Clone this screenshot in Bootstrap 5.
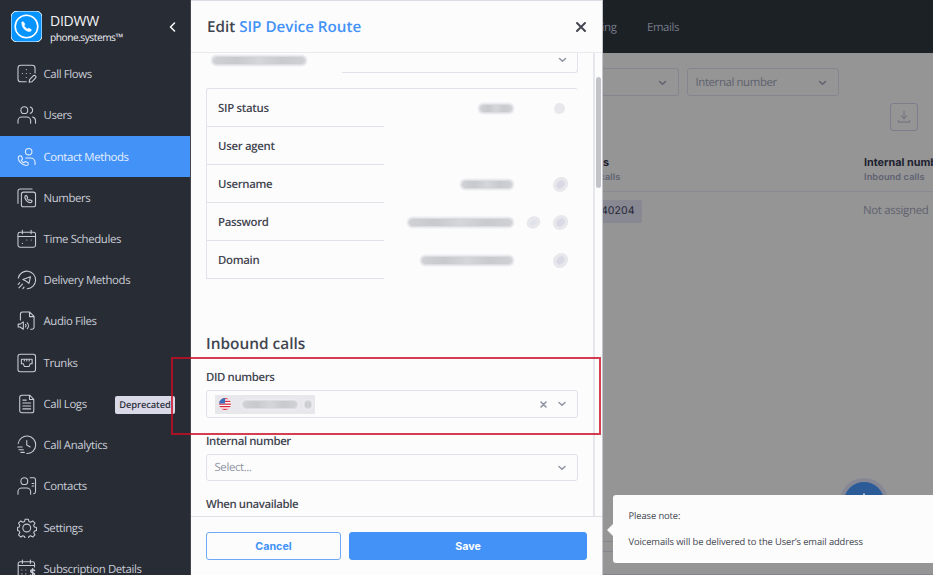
<!DOCTYPE html>
<html lang="en">
<head>
<meta charset="utf-8">
<meta name="viewport" content="width=device-width, initial-scale=1">
<title>Edit SIP Device Route</title>
<link rel="stylesheet" href="https://cdn.jsdelivr.net/npm/bootstrap@5.3.0/dist/css/bootstrap.min.css">
<style>
  body{font-family:"Open Sans",sans-serif;font-size:11.4px;line-height:16px;color:#42454f;background:#959595;text-rendering:geometricPrecision}
  .app{width:933px;height:575px}
  svg{display:block;fill:none;stroke:currentColor;stroke-linecap:round;stroke-linejoin:round}
  .side-link,.fact-name,.field-name,.picker,.back-nav,.filter{letter-spacing:-.38px}
  /* sidebar */
  .side{width:191px;background:#282c35;color:#c5c8d3;border-right:1px solid #44474f}
  .brand-row{height:53.5px;padding:0 13px 0 11px;color:#fff}
  .brand-name{font-size:14px;line-height:16px;color:#f4f4f6;letter-spacing:-.25px;padding-top:1px}
  .brand-sub{font-size:10.2px;line-height:15px;color:#f0f0f4;letter-spacing:-.48px}
  .side-link{height:41.22px;padding:2px 16px 0 17px;gap:7px;color:#c9ccd6;margin-right:-1px}
  .side-link svg{width:19.5px;height:20px;stroke-width:1.1;margin-top:-2px}
  .side-link.current{background:#4292f7;color:#e6efff}
  .tag{width:60px;height:18px;line-height:18px;background:#d9d9e8;color:#30333f;border-radius:2px;font-size:9.4px;font-weight:600;letter-spacing:-.12px}
  /* route editor */
  .panel{width:412px;background:#fcfcfd;border-top:1px solid #dcdce8;border-right:1px solid #c5c5d0}
  .panel-head{height:52px;padding:0 15px 0 16px;border-bottom:1px solid #e9e9ee}
  .panel-title{font-size:15.2px;line-height:20px;font-weight:600;color:#42454f;padding-top:1px}
  .accent{color:#4292f7}
  .panel-body{padding:0 15px 0 15px;border-right:2px solid #e6e6ee}
  .rail{width:7px;padding:24px 1px 0 1px}
  .thumb{width:5px;height:111px;border-radius:3px;background:#c2c3c9}
  .muted-ico{color:#8f93a1}
  .cut-field{height:19.5px;margin-bottom:15px;padding:0 11px 0 7px;position:relative}
  .cut-field::before{content:"";position:absolute;left:136px;right:0;top:0;bottom:0;border:1px solid #e2e2ea;border-width:0 1px 1px 0;border-radius:0 0 3px 0}
  .facts{width:372px;border:1px solid #e2e2eb;border-right:0;border-bottom:0;border-radius:3px 3px 0 0}
  .fact{height:38.15px;padding:1px 13px 0 0}
  .fact-name{width:177px;height:100%;padding:2px 0 0 11px;border-bottom:1px solid #e2e2eb;font-weight:600;letter-spacing:-.3px}
  .tail{width:53px;gap:19px}
  .smudge{height:7px;border-radius:5px;background:linear-gradient(90deg,#d0d1d5,#c8c9cd 25%,#d5d6da 50%,#c9cace 75%,#d0d1d5);box-shadow:0 0 0 1px #dcdde1,0 0 0 2.5px #ececf0}
  .blot{width:9px;height:7px;border-radius:50%;background:#d9d9e6;box-shadow:0 0 0 3.5px #e7e7ec;transform:rotate(-42deg)}
  .blot.even{width:11px;height:11px;box-shadow:none;background:#e7e7ec}
  .blot.faint{width:7px;height:5px;background:#dfe2ea;transform:rotate(-25deg)}
  .section-name{font-size:15.4px;line-height:20px;font-weight:600;margin:55px 0 15px}
  .field-name{font-weight:600;line-height:16px;padding-top:1px}
  .picker{height:27.5px;width:372px;padding:1px 10px 0 7.5px;margin:4px 0 15px;border:1px solid #e1e1ea;border-radius:3px;color:#8f93a1}
  .chip{width:100px;height:18.5px;background:#e7e7ec;padding:0 4px 0 4px}
  .flag{margin-right:12px}
  .panel-foot{height:59px;padding:15px 15px 0;border-top:1px solid #dfdfe6;gap:8px}
  .act{--bs-btn-padding-y:0;--bs-btn-padding-x:0;--bs-btn-font-size:10.7px;--bs-btn-font-weight:700;--bs-btn-border-radius:3px;font-family:Inter,sans-serif;height:28px;line-height:27px}
  .act-cancel{width:135px;color:#4292f7;border-color:#6caaf8;background:#fcfcfd}
  .act-save{width:238px;color:#fff;border-color:#4292f7;background:#4292f7}
  /* dimmed page behind the editor */
  .back{background:#959595;color:#5f616f;border-bottom:1px solid #85858e}
  .back-nav{height:53px;background:#1c2126;color:#767a89;gap:30.5px;padding-top:2px}
  .cut-text{display:flex;justify-content:flex-end}
  .filters{margin-top:15px}
  .filter{height:28px;border:1px solid #85858f;border-radius:3px;padding:2px 11px 0 8px}
  .filter svg{margin-top:-1px}
  .f-one{width:76px;border-left:0;border-radius:0 3px 3px 0}
  .f-two{width:152.5px;margin-left:7.5px}
  .dl{width:28px;height:28px;border:1px solid #7d7d8c;border-radius:3px;color:#777786;margin:7px 0 0 287px}
  .th-row{height:61px;padding-top:24px;border-bottom:1px solid #8a8a93;font-family:Inter,sans-serif}
  .th-main{font-size:10.8px;line-height:15px;font-weight:700;color:#1e2230}
  .th-sub{font-size:9.2px;line-height:15px;font-weight:600;color:#5f6272;letter-spacing:.1px}
  .num{width:39px;height:22.5px;background:#888893;color:#242733;font-family:Inter,sans-serif;font-size:10.6px;border-radius:0 2px 2px 0;padding-right:7.5px}
  .unset{width:70px;letter-spacing:-.3px}
  .strip{height:11px;border:solid #85858e;border-width:1px 0;margin-bottom:22px}
  /* overlays */
  .fab{left:840px;top:478px;width:48px;height:48px;border-radius:50%;background:#2c5c98;border:4px solid #858794;color:#d5dae3;padding-top:11px}
  .note{left:613px;top:494.5px;width:330px;height:68.5px;background:#fcfcfd;border-radius:3px 0 0 3px;padding:13px 15.5px;font-size:9.35px;line-height:16px;letter-spacing:-.09px}
  .note-text{margin-top:10px}
  .note::before{content:"";position:absolute;left:-6px;top:29px;border:6px solid transparent;border-left:0;border-right-color:#fcfcfd}
  .callout-box{left:170.5px;top:357px;width:430px;height:78px;border:2px solid rgba(202,12,36,.8)}
</style>
<script src="https://cdn.jsdelivr.net/npm/bootstrap@5.3.0/dist/js/bootstrap.bundle.min.js"></script>
</head>
<body>
<div class="app d-flex position-relative overflow-hidden">

<aside class="side d-flex flex-column flex-shrink-0 overflow-hidden">
  <div class="brand-row d-flex align-items-center flex-shrink-0">
    <svg width="31" height="31" viewBox="0 0 31 31" stroke="none"><rect width="31" height="31" rx="6" fill="#0894ff"/><circle cx="15.5" cy="15.5" r="11.3" fill="none" stroke="#fff" stroke-width="1.6"/><path d="M11 11.300l1.200-.6 1.700 2.400-.8 1.600c.7 1.500 1.800 2.600 3.300 3.300l1.500-.8 2.500 1.500-.7 1.500c-4.100 1.500-9.900-4-8.700-8.900z" fill="#fff" stroke="#fff" stroke-width=".6"/></svg>
    <div class="ms-2 flex-grow-1 pt-1"><div class="brand-name">DIDWW</div><div class="brand-sub">phone.systems™</div></div>
    <svg width="9" height="10" viewBox="0 0 9 10" stroke-width="1.5"><path d="M6.500 1L2.500 5l4 4"/></svg>
  </div>
  <nav class="d-flex flex-column flex-shrink-0">
    <a class="side-link d-flex align-items-center text-decoration-none flex-shrink-0"><svg viewBox="0 0 20 20"><path d="M9.500 18H4a3 3 0 0 1-3-3V4a3 3 0 0 1 3-3h11.500a3 3 0 0 1 3 3v5M12.500 18.500l.4-2.800 3.700-3.700a1.600 1.600 0 0 1 2.300 2.300l-3.700 3.700zM5.500 9.500h.1M9.500 9.500h.1M13.500 9.500h.1M9.500 5.500h.1M9.500 13.500h.1"/></svg>Call Flows</a>
    <a class="side-link d-flex align-items-center text-decoration-none flex-shrink-0"><svg viewBox="0 0 20 20"><circle cx="7.500" cy="5" r="3.500"/><path d="M1 18.500V16a4 4 0 0 1 4-4h5a4 4 0 0 1 4 4v2.500M13.500 1.800a3.300 3.300 0 0 1 0 6.400M16 12a4 4 0 0 1 3 4v2.500"/></svg>Users</a>
    <a class="side-link current d-flex align-items-center text-decoration-none flex-shrink-0"><svg viewBox="0 0 20 20"><circle cx="12" cy="4.500" r="3.300"/><path d="M9 11h5a4.500 4.500 0 0 1 4.500 4.500v2.200M3 8.800l1.500.2 1.200 3-1.200 1.500a6.500 6.500 0 0 0 2.400 2.400l1.500-1.200 3 1.200.2 1.500c-.3 1-1 1.300-2 1.300C5.500 18.700 1.300 14.500 1.200 10.800c0-1 .8-1.800 1.800-2z"/></svg>Contact Methods</a>
    <a class="side-link d-flex align-items-center text-decoration-none flex-shrink-0"><svg viewBox="0 0 20 20"><rect x="4.500" y="4" width="14.500" height="15" rx="2.200"/><path d="M1 15.500V3a2.200 2.200 0 0 1 2.200-2.200h12.300M8.300 8l1.200-.7 1.500 2-.6 1.100c.4.900 1 1.500 1.900 2l1-.6 2.200 1.300-.6 1.300c-3.200 1.500-7.800-3.200-6.600-6.400z"/></svg>Numbers</a>
    <a class="side-link d-flex align-items-center text-decoration-none flex-shrink-0"><svg viewBox="0 0 20 20"><rect x="1" y="3" width="18" height="15.500" rx="2"/><path d="M1 7.500h18M5.500 1v3.500M14.500 1v3.500M5.500 14.500h.1M10 11h.1M14.500 11h.1"/></svg>Time Schedules</a>
    <a class="side-link d-flex align-items-center text-decoration-none flex-shrink-0"><svg viewBox="0 0 20 20"><path d="M1.300 8A9 9 0 1 1 10.500 18.900M6 9.500l7.800-2.800-1.500 6.800-2.700-2.200zM1.200 14.500l1.700-1.700M2 18l3.600-3.700M6 18.800l1.200-1.500"/></svg>Delivery Methods</a>
    <a class="side-link d-flex align-items-center text-decoration-none flex-shrink-0"><svg viewBox="0 0 20 20"><path d="M3.500 9V3A2.200 2.200 0 0 1 5.700.8H13l4.500 4.500V16.500a2 2 0 0 1-2 2h-1.500M12.800 1v4.500h4.500M1.200 13.200v3h2l3.300 2.300v-7.600l-3.300 2.300zM8.800 13.500a2 2 0 0 1 0 2.600M10.500 11.800a4.300 4.300 0 0 1 0 6"/></svg>Audio Files</a>
    <a class="side-link d-flex align-items-center text-decoration-none flex-shrink-0"><svg viewBox="0 0 20 20"><rect x="1" y="1" width="18" height="18" rx="2.300"/><path d="M4.500 6.200h11v4.500h-2l-1 2.800h-5l-1-2.800h-2zM7.500 6.500v1.500M10 6.500v1.500M12.500 6.500v1.500"/></svg>Trunks</a>
    <a class="side-link d-flex align-items-center text-decoration-none flex-shrink-0"><svg viewBox="0 0 20 20"><path d="M13 1H5a2.200 2.200 0 0 0-2.200 2.200v13.600A2.200 2.200 0 0 0 5 19h10a2.200 2.200 0 0 0 2.200-2.200V5.200zM12.800 1.200v4.200H17M6 6h3.500M6 9h8M6 12h8M6 15h8"/></svg>Call Logs<span class="tag ms-auto text-center">Deprecated</span></a>
    <a class="side-link d-flex align-items-center text-decoration-none flex-shrink-0"><svg viewBox="0 0 20 20"><path d="M1.300 8.500a9 9 0 1 1 8.700 10.300M10 5.500V10l3.500 2M.8 12h4.500M2 14.800h4.500M4 17.600h3.500"/></svg>Call Analytics</a>
    <a class="side-link d-flex align-items-center text-decoration-none flex-shrink-0"><svg viewBox="0 0 20 20"><circle cx="7.500" cy="5" r="3.500"/><path d="M1 18.500V16a4 4 0 0 1 4-4h5a4 4 0 0 1 4 4v2.500M13.500 1.500H17a2 2 0 0 1 2 2v12.500a2 2 0 0 1-2 2M15.500 7.500h1.800M15.500 10h1.800"/></svg>Contacts</a>
    <a class="side-link d-flex align-items-center text-decoration-none flex-shrink-0"><svg viewBox="0 0 20 20"><circle cx="10" cy="10" r="4"/><path d="M8.400 1h3.200l.6 2.300 1.800.8 2.100-1.300 2.300 2.300-1.300 2.100.7 1.700 2.200.5v3.200l-2.200.6-.7 1.700 1.300 2.100-2.300 2.300-2.100-1.300-1.800.8-.6 2.200H8.400l-.6-2.200-1.800-.8-2.100 1.300L1.600 17l1.300-2.100-.7-1.700L0.600 12.600V9.400l1.600-.5.7-1.700L1.600 5.100l2.300-2.300L6 4.100l1.800-.8z"/></svg>Settings</a>
    <a class="side-link d-flex align-items-center text-decoration-none flex-shrink-0"><svg viewBox="0 0 20 20"><path d="M11 19H3.200a2 2 0 0 1-2-2V4.500a2 2 0 0 1 2-2H16a2 2 0 0 1 2 2V8M1.200 6.500H18M5.500.8v3.400M13.700.8v3.400M5 11h.1M9 11h.1M5 15h.1M9 15h.1"/><path d="M18 11.500c-1-1-4-1-4 .8s4 1.300 4 3.200-3.200 2-4.200.8M16 9.800v8.400" stroke-width="1.500"/></svg>Subscription Details</a>
  </nav>
</aside>

<main class="panel d-flex flex-column flex-shrink-0">
  <header class="panel-head d-flex align-items-center justify-content-between flex-shrink-0">
    <h1 class="panel-title m-0">Edit <span class="accent">SIP Device Route</span></h1>
    <svg width="12" height="12" viewBox="0 0 12 12" stroke-width="2"><path d="M2 2l8 8M10 2l-8 8"/></svg>
  </header>
  <div class="d-flex flex-grow-1 overflow-hidden">
    <div class="panel-body flex-grow-1 overflow-hidden">
      <div class="cut-field d-flex justify-content-between align-items-start">
        <span class="smudge mt-1" style="width:92px"></span>
        <svg class="mt-1 muted-ico" width="9" height="6" viewBox="0 0 9 6" stroke-width="1.500"><path d="M1.500 1.500l3 2.700 3-2.700"/></svg>
      </div>
      <div class="facts">
        <div class="fact d-flex align-items-center"><div class="fact-name d-flex align-items-center">SIP status</div><span class="smudge ms-auto" style="width:32px"></span><span class="tail d-flex align-items-center justify-content-end"><span class="blot even"></span></span></div>
        <div class="fact d-flex align-items-center"><div class="fact-name d-flex align-items-center">User agent</div></div>
        <div class="fact d-flex align-items-center"><div class="fact-name d-flex align-items-center">Username</div><span class="smudge ms-auto" style="width:50px"></span><span class="tail d-flex align-items-center justify-content-end"><span class="blot"></span></span></div>
        <div class="fact d-flex align-items-center"><div class="fact-name d-flex align-items-center">Password</div><span class="smudge ms-auto" style="width:103px"></span><span class="tail d-flex align-items-center justify-content-end"><span class="blot faint"></span><span class="blot"></span></span></div>
        <div class="fact d-flex align-items-center"><div class="fact-name d-flex align-items-center">Domain</div><span class="smudge ms-auto" style="width:90px"></span><span class="tail d-flex align-items-center justify-content-end"><span class="blot"></span></span></div>
      </div>
      <h2 class="section-name">Inbound calls</h2>
      <div class="field-name">DID numbers</div>
      <div class="picker d-flex align-items-center">
        <span class="chip d-flex align-items-center">
          <svg class="flag" width="12" height="12" viewBox="0 0 12 12" stroke="none"><defs><clipPath id="disc"><circle cx="6" cy="6" r="6"/></clipPath></defs><g clip-path="url(#disc)"><path fill="#fff" stroke="none" d="M0 0h12v12H0z"/><path stroke="#d9263e" stroke-width="1.300" d="M0 .7h12M0 3.400h12M0 6.100h12M0 8.700h12M0 11.300h12"/><path fill="#3c6fbb" stroke="none" d="M0 0h6v5.500H0z"/></g></svg>
          <span class="smudge" style="width:54px"></span>
          <span class="smudge ms-auto" style="width:6px"></span>
        </span>
        <svg class="ms-auto me-2" width="9" height="9" viewBox="0 0 9 9" stroke-width="1.600"><path d="M2 2l5 5M7 2l-5 5"/></svg>
        <svg width="11" height="6" viewBox="-1.500 0 11 6" stroke-width="1.500"><path d="M1.500 1.500l3 2.700 3-2.700"/></svg>
      </div>
      <div class="field-name">Internal number</div>
      <div class="picker d-flex align-items-center justify-content-between">Select...<svg width="11" height="6" viewBox="-1.500 0 11 6" stroke-width="1.500"><path d="M1.500 1.500l3 2.700 3-2.700"/></svg></div>
      <div class="field-name">When unavailable</div>
    </div>
    <div class="rail"><div class="thumb"></div></div>
  </div>
  <footer class="panel-foot d-flex flex-shrink-0">
    <button class="btn act act-cancel">Cancel</button>
    <button class="btn act act-save">Save</button>
  </footer>
</main>

<section class="back flex-grow-1 d-flex flex-column overflow-hidden">
  <div class="back-nav d-flex align-items-center flex-shrink-0"><span class="cut-text" style="width:13.500px">ing</span><span>Emails</span></div>
  <div class="filters d-flex">
    <div class="filter f-one d-flex align-items-center justify-content-end"><svg width="9" height="6" viewBox="0 0 9 6" stroke-width="1.500"><path d="M1.500 1.500l3 2.700 3-2.700"/></svg></div>
    <div class="filter f-two d-flex align-items-center justify-content-between">Internal number<svg width="9" height="6" viewBox="0 0 9 6" stroke-width="1.500"><path d="M1.500 1.500l3 2.700 3-2.700"/></svg></div>
  </div>
  <div class="dl d-flex align-items-center justify-content-center"><svg width="14" height="14" viewBox="0 0 14 14" stroke-width="1.200"><path d="M7 1v7.500M4.500 6L7 8.500 9.500 6M1.500 10.500v1.700h11v-1.700"/></svg></div>
  <div class="th-row d-flex justify-content-between">
    <div><div class="th-main">s</div><div class="th-sub cut-text" style="width:17.500px">calls</div></div>
    <div class="text-nowrap" style="width:69px"><div class="th-main">Internal number</div><div class="th-sub">Inbound calls</div></div>
  </div>
  <div class="d-flex justify-content-between align-items-center pt-2">
    <span class="num d-flex align-items-center justify-content-end">40204</span>
    <span class="unset text-nowrap">Not assigned</span>
  </div>
  <div class="strip mt-auto"></div>
</section>

<div class="fab position-absolute d-flex justify-content-center"><svg width="14" height="14" viewBox="0 0 14 14" stroke-width="1.600"><path d="M7 1v12M1 7h12"/></svg></div>
<div class="note position-absolute"><div>Please note:</div><div class="note-text">Voicemails will be delivered to the User’s email address</div></div>
<div class="callout-box position-absolute"></div>
</div>
</body>
</html>
